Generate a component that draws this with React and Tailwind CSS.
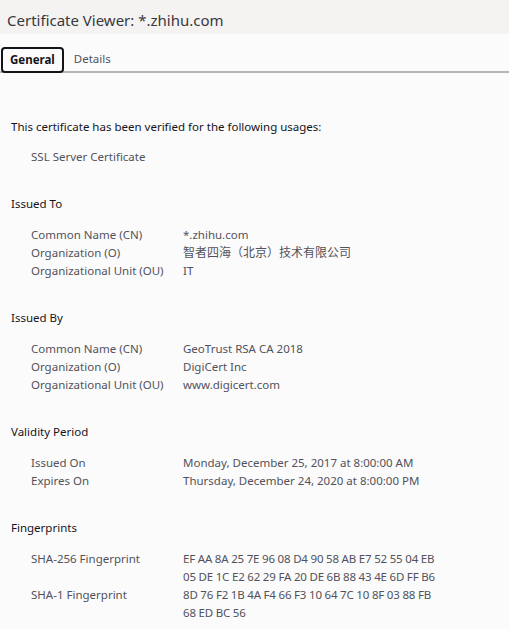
const sections = [
  {
    title: "Issued To",
    rows: [
      ["Common Name (CN)", "*.zhihu.com"],
      ["Organization (O)", <span className="text-[12px]">智者四海（北京）技术有限公司</span>],
      ["Organizational Unit (OU)", "IT"],
    ],
  },
  {
    title: "Issued By",
    rows: [
      ["Common Name (CN)", "GeoTrust RSA CA 2018"],
      ["Organization (O)", "DigiCert Inc"],
      ["Organizational Unit (OU)", "www.digicert.com"],
    ],
  },
  {
    title: "Validity Period",
    rows: [
      ["Issued On", "Monday, December 25, 2017 at 8:00:00 AM"],
      ["Expires On", "Thursday, December 24, 2020 at 8:00:00 PM"],
    ],
  },
  {
    title: "Fingerprints",
    rows: [
      ["SHA-256 Fingerprint", ["EF AA 8A 25 7E 96 08 D4 90 58 AB E7 52 55 04 EB", "05 DE 1C E2 62 29 FA 20 DE 6B 88 43 4E 6D FF B6"]],
      ["SHA-1 Fingerprint", ["8D 76 F2 1B 4A F4 66 F3 10 64 7C 10 8F 03 88 FB", "68 ED BC 56"]],
    ],
  },
]

function Section({ title, rows }) {
  return (
    <div className="mb-[29px]">
      <div className="text-[#15141a]">{title}</div>
      <div className="mt-[13px] pl-5">
        {rows.map(([label, value]) => (
          <div key={label} className="grid grid-cols-[152px_1fr]">
            <div>{label}</div>
            <div>
              {Array.isArray(value)
                ? value.map((line) => (
                    <div key={line} className="tracking-[-0.2px]">
                      {line}
                    </div>
                  ))
                : value}
            </div>
          </div>
        ))}
      </div>
    </div>
  )
}

export default function App() {
  return (
    <div
      className="min-h-[629px] bg-[#fbfbfb] text-[11.5px] leading-[18px] text-[#52525c]"
      style={{ fontFamily: '"Noto Sans", "Noto Sans CJK SC", sans-serif' }}
    >
      <div className="h-[34px] bg-[#f4f3f2] px-[7px] pt-[9px] text-[15px] leading-[22px] text-[#38383d]">
        Certificate Viewer: *.zhihu.com
      </div>
      <div className="mt-[13px] flex items-end border-b-2 border-[#b5b5b8] pl-px">
        <div className="-mb-[2px] rounded-[4px] border-2 border-[#15141a] px-[7px] py-[2px] font-bold text-[#15141a]">
          General
        </div>
        <div className="ml-[10px] pb-[3px]">Details</div>
      </div>
      <div className="px-[11px] pt-[45px]">
        <div className="text-[#15141a]">This certificate has been verified for the following usages:</div>
        <div className="mt-[12px] mb-[29px] pl-5">SSL Server Certificate</div>
        {sections.map((s) => (
          <Section key={s.title} {...s} />
        ))}
      </div>
    </div>
  )
}
